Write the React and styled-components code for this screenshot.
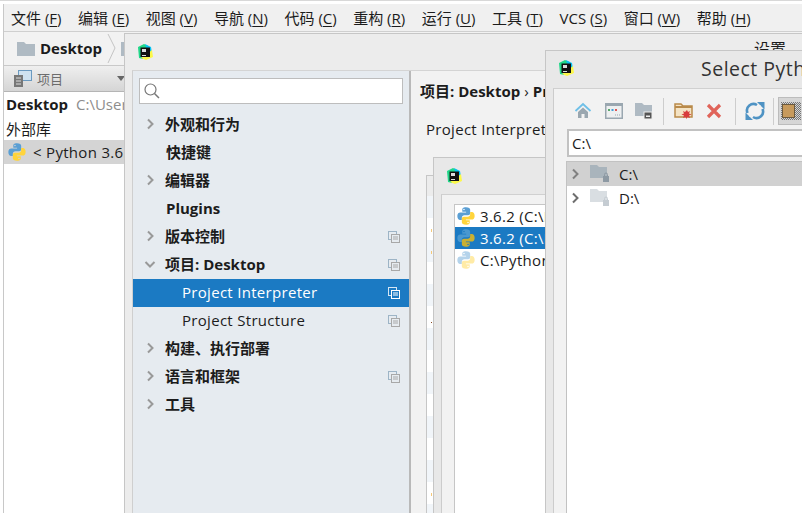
import React from 'react';
import styled, { createGlobalStyle } from 'styled-components';

const FONT = '"Open Sans", "Noto Sans CJK SC", sans-serif';

const menuItems = [
    ['文件', 'F'], ['编辑', 'E'], ['视图', 'V'], ['导航', 'N'], ['代码', 'C'], ['重构', 'R'],
    ['运行', 'U'], ['工具', 'T'], ['VCS', 'S'], ['窗口', 'W'], ['帮助', 'H'],
];

const settingsRows = [
    { label: '外观和行为', arrow: 'right' },
    { label: '快捷键' },
    { label: '编辑器', arrow: 'right' },
    { label: 'Plugins' },
    { label: '版本控制', arrow: 'right', copy: true },
    { label: '项目: Desktop', arrow: 'down', copy: true },
    { label: 'Project Interpreter', sub: true, selected: true, copy: true },
    { label: 'Project Structure', sub: true, copy: true },
    { label: '构建、执行部署', arrow: 'right' },
    { label: '语言和框架', arrow: 'right', copy: true },
    { label: '工具', arrow: 'right' },
];

const PythonIcon = ({ size = 18, faded, dim }) => (
    <svg width={size} height={size} viewBox="0 0 16 16" style={{ opacity: faded ? 0.45 : 1, flex: 'none' }}>
        <path
            fill={dim ? '#4a98cf' : '#5a9fd4'}
            d="M7.900.3C5.200.3 4.700 1.400 4.700 2.500v1.700h3.400v.6H2.900C1.500 4.800.3 5.800.3 8s1.200 3.500 2.400 3.500h1.600V9.500c0-1.200 1-2.100 2.200-2.100h3.400c1 0 1.800-.8 1.800-1.800V2.500C11.700 1.300 10.500.3 7.900.3zM6.200 1.500a.7.700 0 110 1.400.7.700 0 010-1.400z"
        />
        <path
            fill={dim ? '#c9b032' : '#ffd43b'}
            d="M8.100 15.700c2.700 0 3.200-1.100 3.200-2.200v-1.700H7.900v-.6h5.200c1.400 0 2.600-1 2.600-3.200s-1.200-3.500-2.400-3.500h-1.600v2c0 1.200-1 2.100-2.200 2.100H6.100c-1 0-1.800.8-1.800 1.800v3.100c0 1.200 1.200 2.200 3.800 2.200zm1.700-1.200a.7.700 0 110-1.400.7.700 0 010 1.400z"
        />
    </svg>
);

const PyCharmLogo = () => (
    <svg width="16" height="16" viewBox="0 0 16 16" style={{ flex: 'none' }}>
        <path fill="#21d789" d="M1 3l6-3 4 2-5 13-4-1z" />
        <path fill="#07c3f2" d="M8 0l6 3 1 6-5-2z" />
        <path fill="#fcf84a" d="M15 6l1 7-7 3-5-2 6-4z" />
        <rect x="3.500" y="3.500" width="9.500" height="9.500" fill="#111" />
        <rect x="5" y="5" width="4" height="3" fill="#ddd" />
        <rect x="5" y="11" width="4" height="1" fill="#ddd" />
    </svg>
);

const Chevron = ({ dir = 'right', color = '#8a8a8a' }) => (
    <svg width="12" height="12" viewBox="0 0 12 12" style={{ flex: 'none' }}>
        <path
            d={dir === 'right' ? 'M4 1.500L8.500 6 4 10.500' : 'M1.500 4L6 8.500 10.500 4'}
            fill="none"
            stroke={color}
            strokeWidth="2"
        />
    </svg>
);

const CopyIcon = ({ selected }) => (
    <svg width="12" height="12" viewBox="0 0 12 12" style={{ flex: 'none' }}>
        <rect x="0.500" y="0.500" width="8" height="8" fill="none" stroke={selected ? '#d5e6f4' : '#9db4c6'} />
        <rect x="3.500" y="3.500" width="8" height="8" fill={selected ? '#1b7ac3' : '#e6ebf0'} stroke={selected ? '#fff' : '#a8a8a8'} />
        <path d="M5 6h5M5 8h5" stroke={selected ? '#fff' : '#a8a8a8'} />
    </svg>
);

const FolderIcon = ({ w = 18, h = 14, color = '#afbac3' }) => (
    <svg width={w} height={h} viewBox="0 0 18 14" style={{ flex: 'none' }}>
        <path fill={color} d="M0 0h7l2 2h9v12H0z" />
    </svg>
);

const LockedFolder = ({ color, lock }) => (
    <svg width="20" height="18" viewBox="0 0 20 18" style={{ flex: 'none' }}>
        <path fill={color} d="M0 0h7l2 2h8v11H0z" />
        <rect x="13" y="11" width="6" height="6" fill={lock} />
        <path d="M14.500 11V9.500a1.500 1.500 0 013 0V11" fill="none" stroke={lock} />
    </svg>
);

const ToolIcon = styled.span`
    display: flex;
    align-items: center;
    justify-content: center;
    width: ${p => p.$w || 30}px;
    flex: none;
`;

const GlobalStyle = createGlobalStyle`
    html, body { margin: 0; padding: 0; background: #fff; }
    #root { width: 802px; height: 513px; }
`;

const Screen = styled.div`
    position: relative;
    width: 802px;
    height: 513px;
    overflow: hidden;
    box-sizing: border-box;
    padding: 3px 0 0 3px;
    font-family: ${FONT};
    font-size: 14px;
    color: #1c1c1c;
    background: #fff;
    border-top: 1px solid #d8d8d8;
`;

const Ide = styled.div`
    height: 100%;
    display: flex;
    flex-direction: column;
    border-left: 1px solid #c8c8c8;
`;

const MenuBar = styled.div`
    height: 27px;
    flex: none;
    display: flex;
    align-items: center;
    gap: 16.500px;
    padding-left: 7px;
    background: #f0f0f0;
    border-bottom: 1px solid #cfcfcf;
    white-space: nowrap;
    font-size: 15px;
`;

const MenuItem = styled.span`
    u { text-underline-offset: 2px; }
`;

const NavBar = styled.div`
    height: 33px;
    flex: none;
    box-sizing: content-box;
    display: flex;
    align-items: center;
    padding-left: 13px;
    gap: 5px;
    background: #f2f2f2;
    border-bottom: 1px solid #c9c9c9;
    font-size: 15px;
    font-weight: 700;
`;

const NavLabel = styled.span`
    margin-bottom: 2px;
`;

const HeaderRow = styled.div`
    height: 26px;
    flex: none;
    width: 121px;
    box-sizing: border-box;
    display: flex;
    align-items: center;
    padding: 0 0 0 10px;
    gap: 5px;
    color: #6c6c6c;
    font-size: 13px;
    background: linear-gradient(#efefef, #d5d5d5);
    border-bottom: 1px solid #b5b5b5;
`;

const DropArrow = styled.span`
    margin-left: auto;
    width: 0;
    height: 0;
    border-left: 4px solid transparent;
    border-right: 4px solid transparent;
    border-top: 5px solid #666;
`;

const ProjectTree = styled.div`
    width: 121px;
    display: flex;
    flex-direction: column;
    overflow: hidden;
    white-space: nowrap;
`;

const TreeLine = styled.div`
    height: 24px;
    flex: none;
    display: flex;
    align-items: center;
    gap: 7px;
    padding-left: ${p => p.$pad || 2}px;
    background: ${p => (p.$active ? '#d4d4d4' : 'transparent')};
    font-size: 15px;
    letter-spacing: ${p => (p.$active ? '.3px' : '0')};
`;

const Bold = styled.b`
    font-weight: 700;
`;

const Muted = styled.span`
    color: #8d8d8d;
    margin-left: 1px;
`;

const Window = styled.div`
    position: absolute;
    left: ${p => p.$x}px;
    top: ${p => p.$y}px;
    width: ${p => p.$w}px;
    height: ${p => p.$h}px;
    box-sizing: border-box;
    background: ${p => p.$bg || '#ececec'};
    border: 1px solid #c6c6c6;
    display: flex;
    flex-direction: column;
    overflow: hidden;
`;

const TitleBar = styled.div`
    height: ${p => p.$h}px;
    flex: none;
    box-sizing: border-box;
    display: flex;
    align-items: center;
    padding-left: ${p => p.$pad}px;
    padding-bottom: ${p => p.$up || 0}px;
    white-space: nowrap;
`;

const SettingsTitle = styled.span`
    margin-left: 601px;
    font-size: 16px;
    transform: translateY(-4px);
`;

const SettingsBody = styled.div`
    flex: 1;
    display: flex;
    margin-left: 7px;
    border-top: 1px solid #d4d4d4;
    border-left: 1px solid #cfcfcf;
    min-height: 0;
`;

const SidePanel = styled.div`
    width: 278px;
    flex: none;
    box-sizing: border-box;
    background: #e6ebf0;
    border-right: 2px solid #b9b9b9;
    padding-top: 7px;
    display: flex;
    flex-direction: column;
`;

const SearchBox = styled.div`
    margin: 0 6px 7px 6px;
    height: 26px;
    box-sizing: border-box;
    background: #fff;
    border: 1px solid #bdbdbd;
    display: flex;
    align-items: center;
    padding-left: 3px;
    flex: none;
`;

const SettingsRow = styled.div`
    height: 28px;
    flex: none;
    box-sizing: border-box;
    display: flex;
    align-items: center;
    padding: 0 9px 3px ${p => (p.$sub ? 49 : p.$arrow ? 11 : 33)}px;
    gap: 9px;
    background: ${p => (p.$selected ? '#1b7ac3' : 'transparent')};
    color: ${p => (p.$selected ? '#fff' : '#1c1c1c')};
    font-weight: ${p => (p.$sub ? 400 : 700)};
    font-size: 15px;
    letter-spacing: ${p => (p.$sub ? '.3px' : '0')};
    white-space: nowrap;
`;

const RowEnd = styled.span`
    margin-left: auto;
    display: flex;
    transform: translateY(1px);
`;

const MainPane = styled.div`
    flex: 1;
    background: #f2f2f2;
    padding: 9px 0 0 9px;
    white-space: nowrap;
`;

const Crumb = styled.div`
    font-size: 15px;
    font-weight: 700;
`;

const CrumbSep = styled.span`
    font-weight: 400;
    margin: 0 4px;
`;

const PaneLabel = styled.div`
    margin: 18px 0 0 6px;
    font-size: 15px;
    letter-spacing: .3px;
`;

const BackList = styled.div`
    flex: 1;
    position: relative;
    background: repeating-linear-gradient(#f1f5f9 0 22px, #fff 22px 44px);
`;

const Speck = styled.i`
    position: absolute;
    right: 33px;
    top: ${p => p.$top}px;
    width: 1px;
    height: ${p => p.$size}px;
    background: ${p => p.$color};
`;

const DialogPanel = styled.div`
    flex: 1;
    margin-left: 7px;
    background: #f2f2f2;
    border-top: 1px solid #d0d0d0;
    border-left: 1px solid #cccccc;
    display: flex;
    flex-direction: column;
`;

const InterpreterList = styled.div`
    flex: 1;
    margin: 9px 0 0 12px;
    background: #fff;
    border-left: 1px solid #c6c6c6;
    border-top: 1px solid #c6c6c6;
    white-space: nowrap;
`;

const InterpreterRow = styled.div`
    height: 22px;
    box-sizing: border-box;
    display: flex;
    align-items: center;
    gap: 5px;
    padding: 0 0 1px 2px;
    font-size: 15px;
    letter-spacing: .3px;
    background: ${p => (p.$selected ? '#1b7ac3' : 'transparent')};
    color: ${p => (p.$selected ? '#fff' : '#1c1c1c')};
`;

const SelectTitle = styled.span`
    margin-left: 127px;
    font-size: 19.500px;
    letter-spacing: .5px;
    color: #333;
`;

const Toolbar = styled.div`
    height: 38px;
    flex: none;
    display: flex;
    align-items: center;
    padding: 6px 0 0 13px;
    box-sizing: border-box;
`;

const ToolSep = styled.span`
    width: 1px;
    height: 27px;
    margin: 0 ${p => p.$gap || 5}px;
    background: #cdcdcd;
    flex: none;
`;

const ToggleOn = styled.span`
    width: 24px;
    height: 26px;
    flex: none;
    margin-left: 1px;
    display: flex;
    align-items: center;
    justify-content: center;
    background: #d6d6d6;
    border: 1px solid #bcbcbc;
`;

const PathField = styled.div`
    height: 28px;
    flex: none;
    box-sizing: border-box;
    margin: 2px 0 0 13px;
    background: #fff;
    border: 2px solid #c2c2c2;
    border-right: 0;
    display: flex;
    align-items: center;
    padding-left: 3px;
    font-size: 15px;
`;

const FileTree = styled.div`
    flex: 1;
    margin: 4px 0 0 12px;
    background: #fff;
    border-left: 1px solid #c2c2c2;
    border-top: 1px solid #c2c2c2;
`;

const FileRow = styled.div`
    height: 24px;
    display: flex;
    align-items: center;
    padding-left: 2px;
    gap: 9px;
    font-size: 15px;
    background: ${p => (p.$active ? '#d1d1d1' : 'transparent')};
`;

export default function App() {
    return (
        <Screen>
            <GlobalStyle />
            <Ide>
                <MenuBar>
                    {menuItems.map(([name, key]) => (
                        <MenuItem key={key}>{name} (<u>{key}</u>)</MenuItem>
                    ))}
                </MenuBar>
                <NavBar>
                    <FolderIcon />
                    <NavLabel>Desktop</NavLabel>
                    <svg width="9" height="29" viewBox="0 0 9 29" style={{ flex: 'none' }}>
                        <path d="M1 0l7 14-7 15" fill="none" stroke="#c4c4c4" />
                    </svg>
                    <FolderIcon />
                </NavBar>
                <HeaderRow>
                    <svg width="18" height="18" viewBox="0 0 18 18" style={{ flex: 'none' }}>
                        <rect x="4.500" y="0.500" width="13" height="10" fill="#cfe2f0" stroke="#6b9ac0" />
                        <rect x="0" y="5" width="9" height="12" fill="#777" />
                        <path d="M2 8h5M2 11h5M2 14h5" stroke="#ddd" />
                    </svg>
                    项目
                    <DropArrow />
                </HeaderRow>
                <ProjectTree>
                    <TreeLine>
                        <Bold>Desktop</Bold>
                        <Muted>C:\Users</Muted>
                    </TreeLine>
                    <TreeLine>外部库</TreeLine>
                    <TreeLine $active $pad={4}>
                        <PythonIcon />
                        &lt; Python 3.6.2
                    </TreeLine>
                </ProjectTree>
            </Ide>

            <Window $x={124} $y={32} $w={800} $h={520}>
                <TitleBar $h={36} $pad={12}>
                    <PyCharmLogo />
                    <SettingsTitle>设置</SettingsTitle>
                </TitleBar>
                <SettingsBody>
                    <SidePanel>
                        <SearchBox>
                            <svg width="18" height="18" viewBox="0 0 18 18">
                                <circle cx="7.500" cy="7.500" r="5.500" fill="none" stroke="#777" strokeWidth="1.200" />
                                <path d="M11.500 11.500L16 16" stroke="#777" strokeWidth="1.500" />
                            </svg>
                        </SearchBox>
                        {settingsRows.map(row => (
                            <SettingsRow key={row.label} $sub={row.sub} $arrow={row.arrow} $selected={row.selected}>
                                {row.arrow && <Chevron dir={row.arrow} color="#999" />}
                                {row.label}
                                {row.copy && <RowEnd><CopyIcon selected={row.selected} /></RowEnd>}
                            </SettingsRow>
                        ))}
                    </SidePanel>
                    <MainPane>
                        <Crumb>项目: Desktop<CrumbSep>›</CrumbSep>Project Interpreter</Crumb>
                        <PaneLabel>Project Interpreter:</PaneLabel>
                    </MainPane>
                </SettingsBody>
            </Window>

            <Window $x={426} $y={174} $w={40} $h={360} $bg="#ececec">
                <TitleBar $h={20} $pad={0} />
                <BackList>
                    <Speck $top={33} $size={3} $color="#f5c878" />
                    <Speck $top={55} $size={3} $color="#f5c878" />
                    <Speck $top={126} $size={1} $color="#8a4a20" />
                    <Speck $top={297} $size={3} $color="#f5c878" />
                </BackList>
            </Window>

            <Window $x={433} $y={156} $w={300} $h={380} $bg="#e8e8e8">
                <TitleBar $h={36} $pad={12}>
                    <PyCharmLogo />
                </TitleBar>
                <DialogPanel>
                    <InterpreterList>
                        <InterpreterRow><PythonIcon />3.6.2 (C:\Python36\python.exe)</InterpreterRow>
                        <InterpreterRow $selected><PythonIcon dim />3.6.2 (C:\Python36\python.exe)</InterpreterRow>
                        <InterpreterRow><PythonIcon faded />C:\Python36\python.exe</InterpreterRow>
                    </InterpreterList>
                </DialogPanel>
            </Window>

            <Window $x={545} $y={49} $w={400} $h={500} $bg="#e8e8e8">
                <TitleBar $h={37} $pad={12} $up={3}>
                    <PyCharmLogo />
                    <SelectTitle>Select Python Interpreter</SelectTitle>
                </TitleBar>
                <DialogPanel>
                    <Toolbar>
                        <ToolIcon $w={31}>
                            <svg width="18" height="18" viewBox="0 0 18 18">
                                <path d="M1.500 9L9 2l7.500 7" fill="none" stroke="#6fc0e8" strokeWidth="1.800" />
                                <path fill="#9aa7b0" d="M4 10l5-4.500L14 10v6h-3.500v-4h-3v4H4z" />
                            </svg>
                        </ToolIcon>
                        <ToolIcon $w={31}>
                            <svg width="18" height="16" viewBox="0 0 18 16">
                                <rect x="0.750" y="0.750" width="16.500" height="14.500" fill="#eef0f1" stroke="#9aa7b0" strokeWidth="1.500" />
                                <rect x="1" y="1" width="16" height="2" fill="#9aa7b0" />
                                <rect x="3" y="6" width="2" height="2" fill="#59a869" />
                                <rect x="6.500" y="6" width="2" height="2" fill="#40a0d8" />
                                <rect x="10" y="6" width="2" height="2" fill="#e05555" />
                                <path d="M10 12h1M12 12h1M14 12h1" stroke="#9aa7b0" />
                            </svg>
                        </ToolIcon>
                        <ToolIcon $w={29}>
                            <svg width="18" height="18" viewBox="0 0 18 18">
                                <path fill="#afbac3" d="M0 1h7l2 2h8v11H0z" />
                                <rect x="9" y="10" width="8" height="7" fill="#555" stroke="#eee" />
                                <rect x="11" y="13.500" width="4" height="1.500" fill="#eee" />
                            </svg>
                        </ToolIcon>
                        <ToolSep $gap={5} />
                        <ToolIcon $w={28}>
                            <svg width="19" height="18" viewBox="0 0 19 18">
                                <path fill="#f4e3c4" stroke="#b98a4a" strokeWidth="1.500" d="M1 2h6l2 2h9v11H1z" />
                                <path fill="#b98a4a" d="M1 4h17v2H1z" />
                                <path fill="#d83c3c" d="M13 8l1 2 2-1-1 2.500 2.500 1-2.500 1 1 2.500-2.500-1-1 2-1-2-2.500 1 1-2.500-2.500-1 2.500-1-1-2.500 2 1z" />
                            </svg>
                        </ToolIcon>
                        <ToolIcon $w={34}>
                            <svg width="16" height="16" viewBox="0 0 16 16">
                                <path d="M2 2l12 12M14 2L2 14" stroke="#e0645a" strokeWidth="3.200" />
                            </svg>
                        </ToolIcon>
                        <ToolSep $gap={4} />
                        <ToolIcon $w={30}>
                            <svg width="20" height="18" viewBox="0 0 20 18">
                                <path d="M2.500 11A6.500 6.500 0 0 1 12 3" fill="none" stroke="#4f93c4" strokeWidth="2.600" />
                                <path d="M17.500 7A6.500 6.500 0 0 1 8 15" fill="none" stroke="#4f93c4" strokeWidth="2.600" />
                                <path fill="#4f93c4" d="M12 0h7.500v7.500zM8 18H.5v-7.500z" />
                                <path d="M4.500 14.500L15.500 3.500" stroke="#f2f2f2" strokeWidth="1.600" />
                            </svg>
                        </ToolIcon>
                        <ToolSep $gap={3} />
                        <ToggleOn>
                            <svg width="20" height="18" viewBox="0 0 20 18">
                                <defs>
                                    <pattern id="dots" width="2" height="2" patternUnits="userSpaceOnUse">
                                        <rect width="1" height="1" fill="#777" />
                                        <rect x="1" y="1" width="1" height="1" fill="#777" />
                                    </pattern>
                                </defs>
                                <rect width="20" height="18" fill="url(#dots)" />
                                <rect x="1.500" y="2.500" width="12" height="13" fill="#c79a5c" stroke="#6b5a40" />
                            </svg>
                        </ToggleOn>
                    </Toolbar>
                    <PathField>C:\</PathField>
                    <FileTree>
                        <FileRow $active>
                            <Chevron color="#808080" />
                            <LockedFolder color="#a9b4bc" lock="#8d99a3" />
                            <span>C:\</span>
                        </FileRow>
                        <FileRow>
                            <Chevron color="#6e6e6e" />
                            <LockedFolder color="#d9dee2" lock="#c5ccd2" />
                            <span>D:\</span>
                        </FileRow>
                    </FileTree>
                </DialogPanel>
            </Window>
        </Screen>
    );
}
